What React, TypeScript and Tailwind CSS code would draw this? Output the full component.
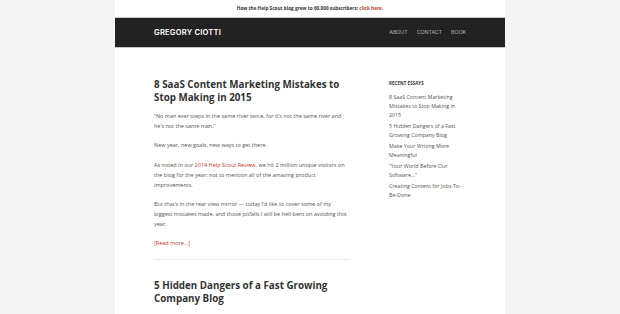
import React from "react";

const essays = [
  "8 SaaS Content Marketing Mistakes to Stop Making in 2015",
  "5 Hidden Dangers of a Fast Growing Company Blog",
  "Make Your Writing More Meaningful",
  "\u201CYour World Before Our Software…\u201D",
  "Creating Content for Jobs-To-Be-Done",
];

function Post({ title, children }: { title: string; children?: React.ReactNode }) {
  return (
    <article>
      <h2 className="text-[9.8px] leading-[13px] font-bold text-[#333]">{title}</h2>
      {children}
    </article>
  );
}

export default function App() {
  return (
    <div className="min-h-screen bg-[#f4f4f4]" style={{ fontFamily: '"Open Sans", sans-serif' }}>
      <div className="mx-auto w-[390px] min-h-[314px] bg-white">
        <div className="h-[17px] flex items-center justify-center text-[4.7px] font-bold text-[#333]">
          How the Help Scout blog grew to 60,000 subscribers:&nbsp;
          <span className="text-[#c0392b]">click here.</span>
        </div>
        <header className="h-[31px] bg-[#222] border-y border-[#c8c8c8] flex items-center justify-between px-[39px]">
          <span className="text-[7.6px] font-semibold tracking-[0.2px] text-white" style={{ fontFamily: "Inter, sans-serif" }}>
            GREGORY CIOTTI
          </span>
          <nav className="flex gap-[9px] text-[5.3px] font-light text-[#ddd]" style={{ fontFamily: "Inter, sans-serif" }}>
            <span>ABOUT</span>
            <span>CONTACT</span>
            <span>BOOK</span>
          </nav>
        </header>
        <div className="flex px-[39px] pt-[30px]">
          <main className="w-[196px] text-[5.5px] leading-[9.7px] text-[#555]">
            <Post title="8 SaaS Content Marketing Mistakes to Stop Making in 2015">
              <p className="mt-[8px]">
                “No man ever steps in the same river twice, for it’s not the same river and he’s not the same man.”
              </p>
              <p className="mt-[10px]">New year, new goals, new ways to get there.</p>
              <p className="mt-[10px]">
                As noted in our <span className="text-[#c0392b]">2014 Help Scout Review</span>, we hit 2 million unique visitors on
                the blog for the year; not to mention all of the amazing product improvements.
              </p>
              <p className="mt-[10px]">
                But that’s in the rear view mirror — today I’d like to cover some of my biggest mistakes made, and those
                pitfalls I will be hell-bent on avoiding this year.
              </p>
              <p className="mt-[10px] text-[#c0392b]">[Read more…]</p>
            </Post>
            <div className="h-px bg-[#ececec] mt-[10px] mb-[19px]" />
            <Post title="5 Hidden Dangers of a Fast Growing Company Blog" />
          </main>
          <aside className="ml-[39px] w-[77px] pt-[2px]">
            <h3 className="text-[4.4px] font-bold text-[#333] tracking-[0.1px]">RECENT ESSAYS</h3>
            <ul className="mt-[6px] flex flex-col gap-[2px] text-[5.3px] leading-[9px] text-[#555]">
              {essays.map((e) => (
                <li key={e}>{e}</li>
              ))}
            </ul>
          </aside>
        </div>
      </div>
    </div>
  );
}
